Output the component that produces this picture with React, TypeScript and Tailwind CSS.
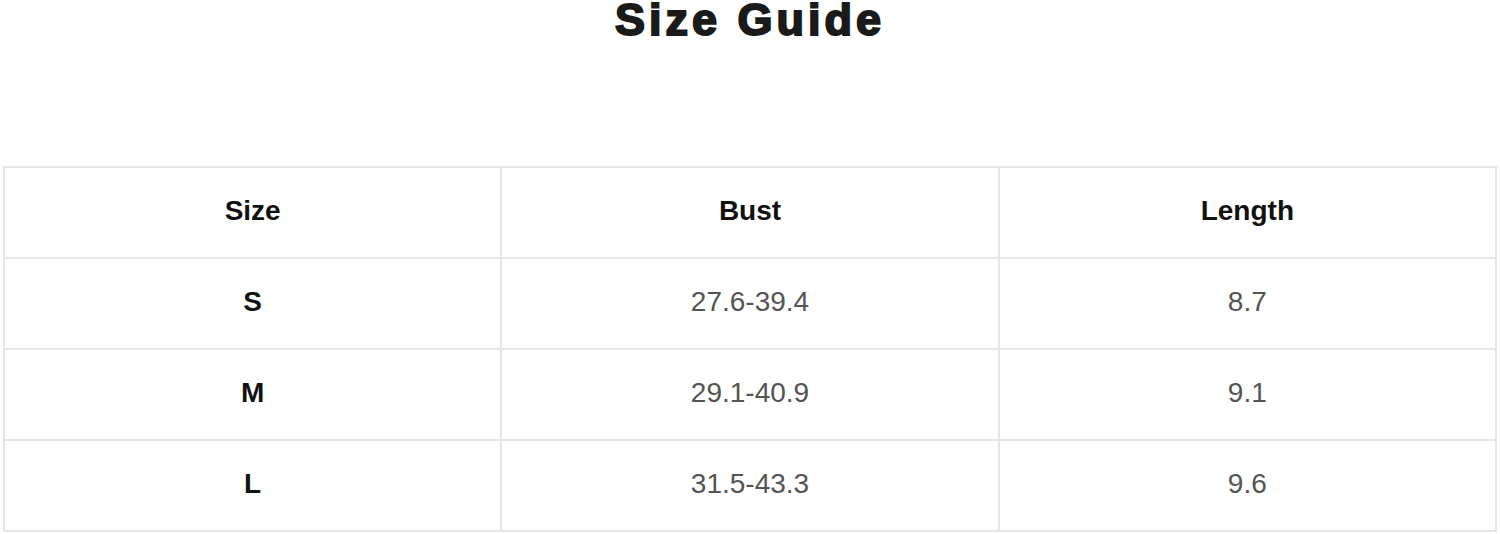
const rows = [
  { size: "S", bust: "27.6-39.4", length: "8.7" },
  { size: "M", bust: "29.1-40.9", length: "9.1" },
  { size: "L", bust: "31.5-43.3", length: "9.6" },
];

export default function App() {
  return (
    <div className="w-[1500px] h-[534px] bg-white overflow-hidden font-['Liberation_Sans',Arial,sans-serif]">
      <div className="h-[166px] pt-[2px]">
        <h1 className="text-center text-[45px] leading-[36px] font-bold tracking-[4px] text-[#1a1a1a] [-webkit-text-stroke:2px_#1a1a1a]">
          Size Guide
        </h1>
      </div>
      <div className="ml-[3px] w-[1494px] grid grid-cols-3 border-l-2 border-t-2 border-[#e6e6e6]">
        <HeadCell>Size</HeadCell>
        <HeadCell>Bust</HeadCell>
        <HeadCell>Length</HeadCell>
        {rows.map((r) => (
          <Row key={r.size} {...r} />
        ))}
      </div>
    </div>
  );
}

function HeadCell({ children }: { children: React.ReactNode }) {
  return (
    <div className="h-[91px] pb-[4px] flex items-center justify-center border-r-2 border-b-2 border-[#e6e6e6] text-[28px] font-bold text-[#111]">
      {children}
    </div>
  );
}

function Row({ size, bust, length }: { size: string; bust: string; length: string }) {
  return (
    <>
      <div className="h-[91px] pb-[4px] flex items-center justify-center border-r-2 border-b-2 border-[#e6e6e6] text-[28px] font-bold text-[#111]">
        {size}
      </div>
      <div className="h-[91px] pb-[4px] flex items-center justify-center border-r-2 border-b-2 border-[#e6e6e6] text-[28px] text-[#555]">
        {bust}
      </div>
      <div className="h-[91px] pb-[4px] flex items-center justify-center border-r-2 border-b-2 border-[#e6e6e6] text-[28px] text-[#555]">
        {length}
      </div>
    </>
  );
}
